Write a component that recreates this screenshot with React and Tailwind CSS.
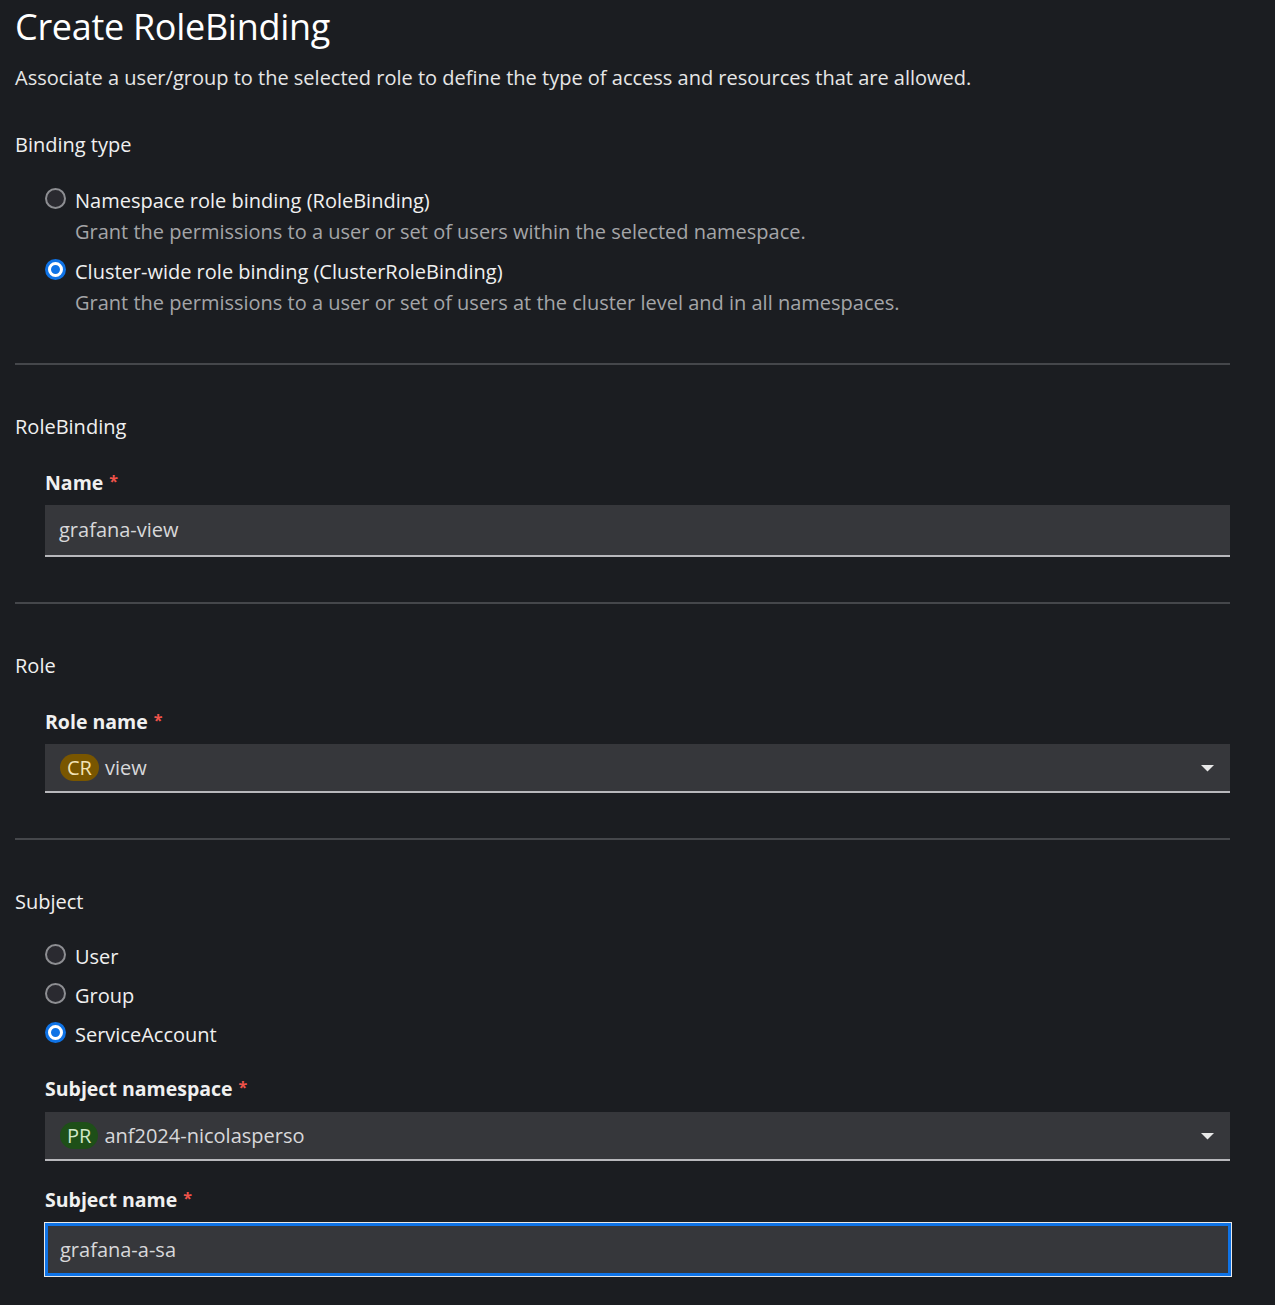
import React from "react";

const Radio = ({ checked, label, desc }) => (
  <div className="flex items-start gap-[9px]">
    <div className="pt-[1px]">
      {checked ? (
        <div className="w-[21px] h-[21px] rounded-full bg-[#0f73e6] flex items-center justify-center">
          <div className="w-[15px] h-[15px] rounded-full border-[3px] border-white bg-[#0f73e6]" />
        </div>
      ) : (
        <div className="w-[21px] h-[21px] rounded-full border-2 border-[#8d8e92] bg-[#2a2a30]" />
      )}
    </div>
    <div>
      <div className="text-[20px] leading-[27px] text-[#f0f0f0]">{label}</div>
      {desc && <div className="text-[20px] leading-[27px] text-[#a4a5a8] mt-[4px]">{desc}</div>}
    </div>
  </div>
);

const Label = ({ children }) => (
  <div className="font-bold text-[19.5px] leading-[27px] text-[#f0f0f0] flex items-center gap-[6px]">
    {children}
    <span className="text-[#f0534a] text-[16px] leading-[16px] -mt-[4px]">*</span>
  </div>
);

const Caret = () => (
  <svg width="13" height="8" viewBox="0 0 13 8" className="mr-[16px]">
    <path d="M0 1 L13 1 L6.5 7.5 Z" fill="#e8e8e8" />
  </svg>
);

export default function App() {
  return (
    <div
      className="min-h-[1305px] bg-[#1b1d21] text-[#f0f0f0] pl-[15px] pr-[45px] pt-[4px]"
      style={{ fontFamily: '"Open Sans", "Noto Sans", sans-serif' }}
    >
      <h1 className="text-[36px] leading-[46px] text-white tracking-[-0.3px]">Create RoleBinding</h1>
      <p className="text-[20px] leading-[27px] text-[#e6e6e6] mt-[14px]">
        Associate a user/group to the selected role to define the type of access and resources that are allowed.
      </p>

      <div className="text-[20px] leading-[27px] mt-[40px]">Binding type</div>
      <div className="pl-[30px] mt-[29px] flex flex-col gap-[13px]">
        <Radio
          label="Namespace role binding (RoleBinding)"
          desc="Grant the permissions to a user or set of users within the selected namespace."
        />
        <Radio
          checked
          label="Cluster-wide role binding (ClusterRoleBinding)"
          desc="Grant the permissions to a user or set of users at the cluster level and in all namespaces."
        />
      </div>

      <div className="h-[2px] bg-[#45474b] mt-[47px]" />

      <div className="text-[20px] leading-[27px] mt-[48px]">RoleBinding</div>
      <div className="pl-[30px] mt-[29px]">
        <Label>Name</Label>
        <div className="mt-[9px] h-[52px] bg-[#36373b] border-b-2 border-[#b8b8bc] flex items-center px-[14px] text-[20px] text-[#d8d8da]">
          grafana-view
        </div>
      </div>

      <div className="h-[2px] bg-[#45474b] mt-[45px]" />

      <div className="text-[20px] leading-[27px] mt-[48px]">Role</div>
      <div className="pl-[30px] mt-[29px]">
        <Label>Role name</Label>
        <div className="mt-[9px] h-[49px] bg-[#36373b] border-b-2 border-[#b8b8bc] flex items-center justify-between pl-[15px] text-[20px] text-[#d8d8da]">
          <div className="flex items-center gap-[6px]">
            <span className="bg-[#795600] text-[#f3e3b8] rounded-full px-[7px] leading-[27px] h-[27px]">CR</span>
            <span>view</span>
          </div>
          <Caret />
        </div>
      </div>

      <div className="h-[2px] bg-[#45474b] mt-[45px]" />

      <div className="text-[20px] leading-[27px] mt-[48px]">Subject</div>
      <div className="pl-[30px] mt-[28px] flex flex-col gap-[12px]">
        <Radio label="User" />
        <Radio label="Group" />
        <Radio checked label="ServiceAccount" />
      </div>

      <div className="pl-[30px] mt-[27px]">
        <Label>Subject namespace</Label>
        <div className="mt-[10px] h-[49px] bg-[#36373b] border-b-2 border-[#b8b8bc] flex items-center justify-between pl-[15px] text-[20px] text-[#d8d8da]">
          <div className="flex items-center gap-[6px]">
            <span className="bg-[#1e4f18] text-[#d2e8c8] rounded-full px-[7px] leading-[27px] h-[27px]">PR</span>
            <span>anf2024-nicolasperso</span>
          </div>
          <Caret />
        </div>

        <div className="mt-[25px]">
          <Label>Subject name</Label>
        </div>
        <div className="mt-[9px] -ml-[1px] -mr-[2px] h-[55px] border-[1px] border-[#e8e8e8] p-0">
          <div className="h-full bg-[#36373b] border-[3px] border-[#0f73e6] flex items-center px-[12px] text-[20px] text-[#d8d8da]">
            grafana-a-sa
          </div>
        </div>
      </div>
    </div>
  );
}
